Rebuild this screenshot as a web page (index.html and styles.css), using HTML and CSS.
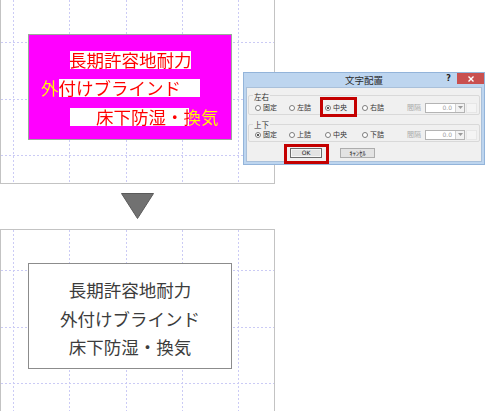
FILE: index.html
```html
<!DOCTYPE html>
<html lang="ja">
<head>
<meta charset="utf-8">
<title>文字配置</title>
<link rel="stylesheet" href="styles.css">
</head>
<body>
<div class="page">
  <div class="panel panel-top">
    <svg class="grid" width="273" height="183" viewBox="0 0 273 183">
      <g stroke="#cbcbf5" stroke-width="1" stroke-dasharray="2 2">
        <line x1="12.5" y1="0" x2="12.5" y2="183"/>
        <line x1="68.5" y1="0" x2="68.5" y2="183"/>
        <line x1="125.5" y1="0" x2="125.5" y2="183"/>
        <line x1="181.5" y1="0" x2="181.5" y2="183"/>
        <line x1="237.5" y1="0" x2="237.5" y2="183"/>
        <line x1="0" y1="42.5" x2="273" y2="42.5"/>
        <line x1="0" y1="99.5" x2="273" y2="99.5"/>
        <line x1="0" y1="155.5" x2="273" y2="155.5"/>
      </g>
    </svg>
    <div class="textbox textbox-edit">
      <div class="eline eline-1"><span class="etext etext-1">長期許容地耐力</span></div>
      <div class="eline eline-2"><span class="etext etext-2">外付けブラインド</span></div>
      <div class="eline eline-3"><span class="etext etext-3">床下防湿・換気</span></div>
    </div>
  </div>

  <svg class="arrow" width="33" height="26" viewBox="0 0 33 26">
    <polygon points="0.5,0.5 32.5,0.5 16.5,25.5" fill="#717171" stroke="#5a5a5a" stroke-width="1"/>
  </svg>

  <div class="panel panel-bottom">
    <svg class="grid" width="273" height="181" viewBox="0 0 273 181">
      <g stroke="#cbcbf5" stroke-width="1" stroke-dasharray="2 2">
        <line x1="12.5" y1="0" x2="12.5" y2="181"/>
        <line x1="68.5" y1="0" x2="68.5" y2="181"/>
        <line x1="125.5" y1="0" x2="125.5" y2="181"/>
        <line x1="181.5" y1="0" x2="181.5" y2="181"/>
        <line x1="237.5" y1="0" x2="237.5" y2="181"/>
        <line x1="0" y1="40.5" x2="273" y2="40.5"/>
        <line x1="0" y1="97.5" x2="273" y2="97.5"/>
        <line x1="0" y1="153.5" x2="273" y2="153.5"/>
      </g>
    </svg>
    <div class="textbox textbox-result">
      <div class="rline">長期許容地耐力</div>
      <div class="rline">外付けブラインド</div>
      <div class="rline">床下防湿・換気</div>
    </div>
  </div>

  <div class="dialog">
    <div class="titlebar">
      <span class="tb-side"></span>
      <span class="tb-title">文字配置</span>
      <span class="tb-side tb-right">
        <span class="tb-help">?</span>
        <span class="tb-close">
          <svg width="6" height="6" viewBox="0 0 6 6"><path d="M0.5 0.5 L5.5 5.5 M5.5 0.5 L0.5 5.5" stroke="#fff" stroke-width="1.4"/></svg>
        </span>
      </span>
    </div>
    <div class="client">
      <div class="group group-1">
        <span class="group-label">左右</span>
        <div class="row">
          <span class="opt w34"><span class="radio"></span><span class="lbl">固定</span></span>
          <span class="opt w36"><span class="radio"></span><span class="lbl">左詰</span></span>
          <span class="opt w37"><span class="radio on"></span><span class="lbl">中央</span></span>
          <span class="opt w45"><span class="radio"></span><span class="lbl">右詰</span></span>
          <span class="lbl dis">間隔</span>
          <span class="combo"><span class="combo-val">0.0</span><span class="combo-btn"><svg width="5" height="3" viewBox="0 0 5 3"><path d="M0 0 L5 0 L2.5 3 Z" fill="#9a9a9a"/></svg></span></span>
          <span class="spin"></span>
        </div>
      </div>
      <div class="group group-2">
        <span class="group-label">上下</span>
        <div class="row">
          <span class="opt w34"><span class="radio on"></span><span class="lbl">固定</span></span>
          <span class="opt w36"><span class="radio"></span><span class="lbl">上詰</span></span>
          <span class="opt w37"><span class="radio"></span><span class="lbl">中央</span></span>
          <span class="opt w45"><span class="radio"></span><span class="lbl">下詰</span></span>
          <span class="lbl dis">間隔</span>
          <span class="combo"><span class="combo-val">0.0</span><span class="combo-btn"><svg width="5" height="3" viewBox="0 0 5 3"><path d="M0 0 L5 0 L2.5 3 Z" fill="#9a9a9a"/></svg></span></span>
          <span class="spin"></span>
        </div>
      </div>
      <div class="buttons">
        <span class="btn btn-ok">OK</span>
        <span class="btn btn-cancel">ｷｬﾝｾﾙ</span>
      </div>
    </div>
  </div>

  <div class="mark mark-center"></div>
  <div class="mark mark-ok"></div>
</div>
</body>
</html>
```

FILE: styles.css
```css
html, body {
  margin: 0;
  padding: 0;
  background: #ffffff;
}

body {
  font-family: "Noto Sans CJK JP", "Noto Sans", sans-serif;
}

.page {
  position: relative;
  width: 488px;
  height: 411px;
  overflow: hidden;
}

.panel {
  position: relative;
  box-sizing: border-box;
  width: 275px;
  border: 1px solid #c3c3c3;
  padding-left: 27px;
}

.panel-top {
  height: 184px;
  border-top: none;
  padding-top: 34px;
}

.panel-bottom {
  height: 183px;
  padding-top: 33px;
}

.grid {
  position: absolute;
  left: 0;
  top: 0;
  display: block;
}

.arrow {
  display: block;
  margin: 9px 0 10px 121px;
}

.textbox {
  position: relative;
  box-sizing: border-box;
  width: 204px;
  height: 106px;
  display: flex;
  flex-direction: column;
}

/* edit state (top) */
.textbox-edit {
  background: #ff00ff;
  border: 1px solid #9aab9a;
  padding-top: 11px;
}

.eline {
  height: 28.25px;
  line-height: 28.25px;
  font-size: 17.5px;
  white-space: nowrap;
  background-repeat: no-repeat;
  background-size: 100% 18px;
  background-position: 0 center;
}

.eline-1 {
  background-image: linear-gradient(to right, transparent 41px, #ffffff 41px, #ffffff 162px, transparent 162px);
}
.eline-2 {
  background-image: linear-gradient(to right, transparent 30px, #ffffff 30px, #ffffff 171px, transparent 171px);
}
.eline-3 {
  background-image: linear-gradient(to right, transparent 41px, #ffffff 41px, #ffffff 160px, transparent 160px);
}

.etext {
  display: inline-block;
  color: transparent;
  -webkit-background-clip: text;
  background-clip: text;
}

.etext-1 {
  margin-left: 40px;
  background-image: linear-gradient(to right, #ff0000, #ff0000);
}
.etext-2 {
  margin-left: 12px;
  background-image: linear-gradient(to right, #ffff00 18px, #ff0000 18px);
}
.etext-3 {
  margin-left: 67px;
  background-image: linear-gradient(to right, #ff0000 93px, #ffff00 93px);
}

/* result state (bottom) */
.textbox-result {
  background: #ffffff;
  border: 1px solid #8c8c8c;
  padding-top: 12px;
  align-items: center;
}

.rline {
  height: 28.5px;
  line-height: 28.5px;
  font-size: 17.5px;
  color: #3c3c3c;
  white-space: nowrap;
}

/* dialog */
.dialog {
  position: absolute;
  left: 243px;
  top: 72px;
  width: 242px;
  height: 93px;
  box-sizing: border-box;
  background: #bdd5ef;
  border: 1px solid #93b4da;
  padding: 0 2px 2px 2px;
  display: flex;
  flex-direction: column;
}

.titlebar {
  height: 14px;
  flex: none;
  display: grid;
  grid-template-columns: 1fr auto 1fr;
  align-items: start;
}

.tb-title {
  font-size: 9.5px;
  line-height: 14px;
  color: #2a2a2a;
  white-space: nowrap;
}

.tb-right {
  display: flex;
  justify-content: flex-end;
  align-items: flex-start;
}

.tb-help {
  font-family: "DejaVu Sans", sans-serif;
  font-weight: bold;
  font-size: 8px;
  line-height: 11px;
  color: #222222;
  margin-right: 6px;
  margin-top: 0px;
}

.tb-close {
  width: 27px;
  height: 11px;
  margin-right: -2px;
  background: #c9504f;
  display: flex;
  align-items: center;
  justify-content: center;
}

.tb-close svg {
  display: block;
}

.client {
  flex: 1;
  box-sizing: border-box;
  background: #f0f0f0;
  border: 1px solid #a9c0da;
  display: flex;
  flex-direction: column;
}

.group {
  margin: 0 1px 0 1px;
  border: 1px solid #d9d9d9;
  border-radius: 2px;
  padding: 0 4px 2px 6px;
}

.group-1 {
  margin-top: 7px;
}

.group-2 {
  margin-top: 9px;
}

.group-label {
  display: block;
  width: fit-content;
  margin-left: -2px;
  padding: 0 1px;
  background: #f0f0f0;
  font-size: 7.5px;
  line-height: 8px;
  color: #333333;
}

.group-1 .group-label {
  margin-top: -3px;
}

.group-2 .group-label {
  margin-top: -4px;
}

.row {
  display: flex;
  align-items: center;
  height: 9px;
}

.group-1 .row {
  margin-top: 2px;
}

.group-2 .row {
  margin-top: 1px;
}

.opt {
  display: flex;
  align-items: center;
  flex: none;
}

.w34 { width: 34px; }
.w36 { width: 36px; }
.w37 { width: 37px; }
.w45 { width: 45px; }

.radio {
  position: relative;
  box-sizing: border-box;
  width: 6px;
  height: 6px;
  border: 1px solid #7d7d7d;
  border-radius: 50%;
  background: #ffffff;
  margin-right: 2px;
  flex: none;
}

.radio.on::after {
  content: "";
  position: absolute;
  left: 1px;
  top: 1px;
  width: 2px;
  height: 2px;
  border-radius: 50%;
  background: #222222;
}

.lbl {
  font-size: 7px;
  line-height: 9px;
  color: #333333;
  white-space: nowrap;
}

.lbl.dis {
  color: #a8a8a8;
  width: 18px;
  flex: none;
}

.combo {
  box-sizing: border-box;
  width: 40px;
  height: 10px;
  border: 1px solid #b4b4b4;
  background: #ffffff;
  display: flex;
  align-items: center;
  justify-content: flex-end;
  flex: none;
}

.combo-val {
  font-family: "DejaVu Sans", sans-serif;
  font-size: 6px;
  line-height: 8px;
  color: #a0a0a0;
  margin-right: 3px;
}

.combo-btn {
  box-sizing: border-box;
  width: 9px;
  height: 8px;
  border-left: 1px solid #cfcfcf;
  background: #f2f2f2;
  display: flex;
  align-items: center;
  justify-content: center;
}

.combo-btn svg {
  display: block;
}

.spin {
  box-sizing: border-box;
  width: 11px;
  height: 10px;
  margin-left: 1px;
  border: 1px solid #e6e6e6;
  background: #f4f4f4;
  flex: none;
}

.buttons {
  display: flex;
  gap: 18px;
  padding-left: 43px;
  margin-top: 6px;
}

.btn {
  box-sizing: border-box;
  height: 10px;
  display: flex;
  align-items: center;
  justify-content: center;
  background: #e3e3e3;
  border: 1px solid #adadad;
  font-size: 6.5px;
  line-height: 8px;
  color: #222222;
}

.btn-ok {
  width: 32px;
  border-color: #6c6c6c;
  box-shadow: inset 0 0 0 1px #f6f6f6;
  font-family: "DejaVu Sans", sans-serif;
  font-size: 6px;
}

.btn-cancel {
  width: 35px;
}

/* red annotation frames */
.mark {
  position: absolute;
  box-sizing: border-box;
  border: 3px solid #c40000;
}

.mark-center {
  left: 320px;
  top: 97px;
  width: 37px;
  height: 20px;
}

.mark-ok {
  left: 284px;
  top: 144px;
  width: 45px;
  height: 20px;
}
```
